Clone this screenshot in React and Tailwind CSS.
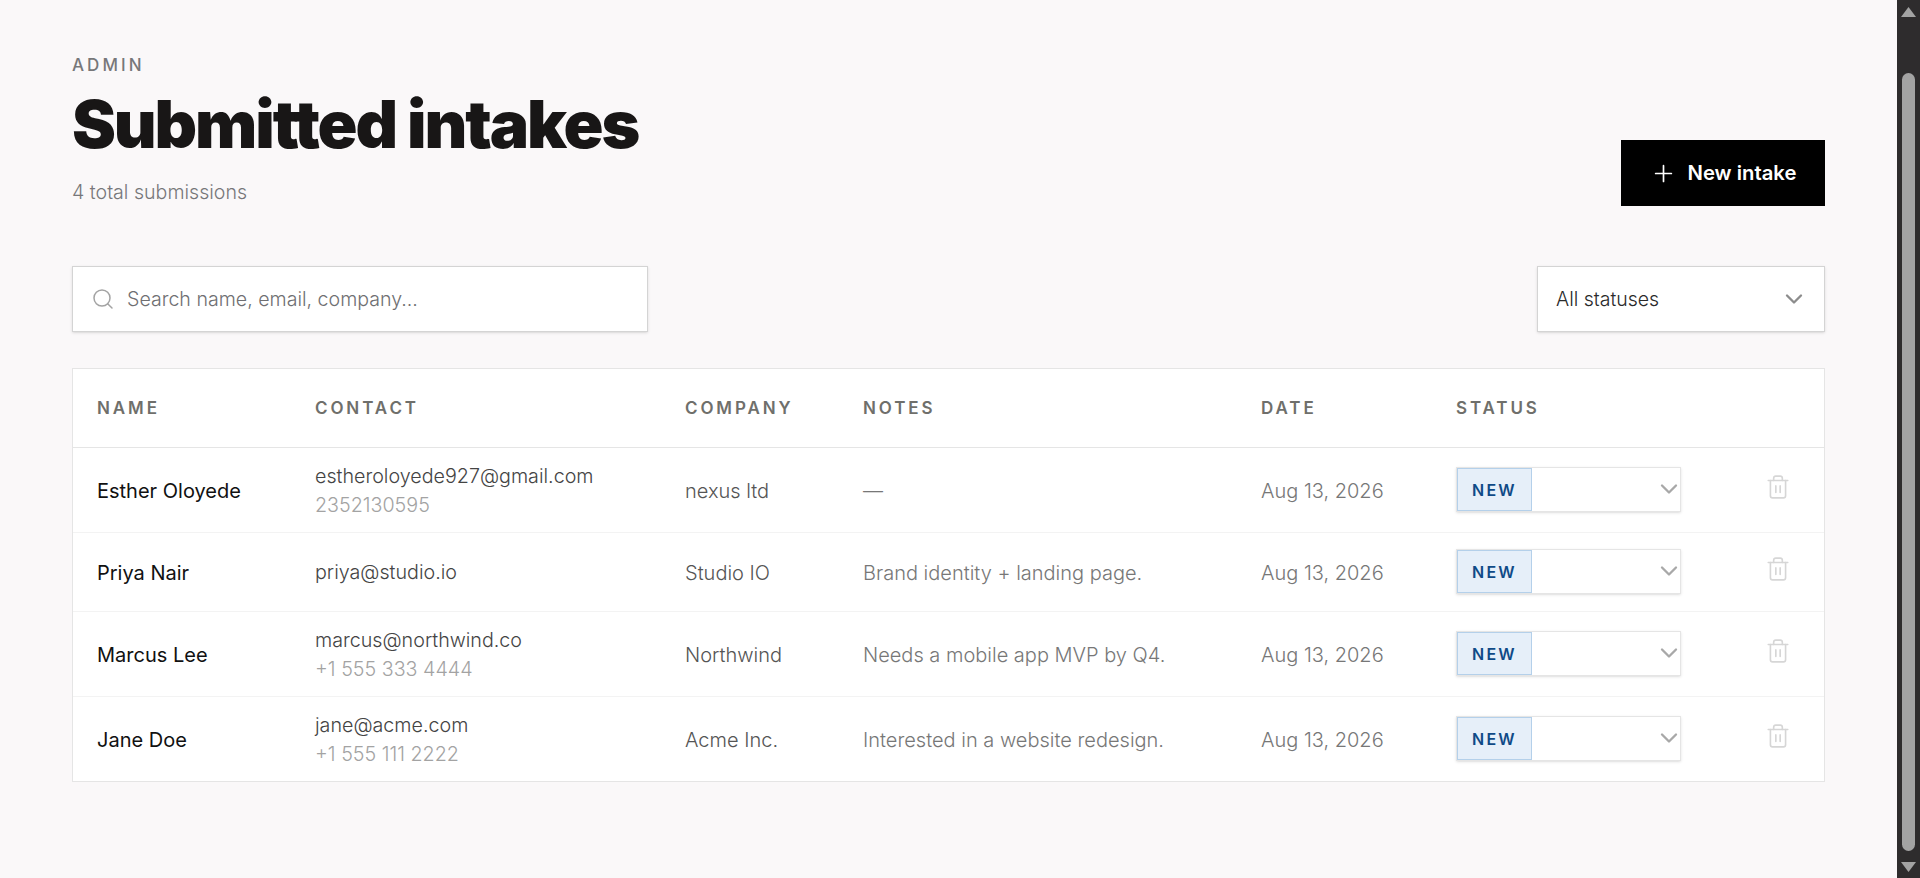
import React from 'react';
import { Search, Plus, ChevronDown, Trash2 } from 'lucide-react';

const intakes = [
  { name: 'Esther Oloyede', email: 'estheroloyede927@gmail.com', phone: '2352130595', company: 'nexus ltd', notes: '—', date: 'Aug 13, 2026' },
  { name: 'Priya Nair', email: 'priya@studio.io', phone: '', company: 'Studio IO', notes: 'Brand identity + landing page.', date: 'Aug 13, 2026' },
  { name: 'Marcus Lee', email: 'marcus@northwind.co', phone: '+1 555 333 4444', company: 'Northwind', notes: 'Needs a mobile app MVP by Q4.', date: 'Aug 13, 2026' },
  { name: 'Jane Doe', email: 'jane@acme.com', phone: '+1 555 111 2222', company: 'Acme Inc.', notes: 'Interested in a website redesign.', date: 'Aug 13, 2026' },
];

const headers = ['Name', 'Contact', 'Company', 'Notes', 'Date', 'Status', ''];

const StatusSelect = () => (
  <div className="flex h-[45px] w-[225px] items-stretch border border-[#e5e5e5] bg-white shadow-sm">
    <span className="flex w-[75px] items-center justify-center border border-[#b4d0ea] bg-[#e6eff9] pt-[2px] text-[16px] font-semibold tracking-[0.14em] text-[#0f4a87]">
      NEW
    </span>
    <div className="flex flex-1 items-center justify-end">
      <ChevronDown size={28} strokeWidth={2} className="-mr-[3px] text-[#a8a8a8]" />
    </div>
  </div>
);

const Scrollbar = () => (
  <aside className="flex h-full w-[23px] shrink-0 flex-col items-center bg-[#2e2c2d] pt-[7px] pb-[6px]">
    <svg width="15" height="10" viewBox="0 0 15 10" className="shrink-0">
      <path d="M7.5 0 L15 10 H0 Z" fill="#a3a3a3" />
    </svg>
    <div className="mt-[56px] mb-[11px] w-[13px] flex-1 rounded-full bg-[#a3a3a3]" />
    <svg width="15" height="10" viewBox="0 0 15 10" className="shrink-0">
      <path d="M0 0 H15 L7.5 10 Z" fill="#a3a3a3" />
    </svg>
  </aside>
);

export default function App() {
  return (
    <div className="flex h-[878px] overflow-hidden bg-[#faf8f9] font-['Inter',sans-serif]">
      <main className="min-w-0 flex-1 px-[72px] pt-[52px]">
        <div className="flex items-end justify-between">
          <div>
            <p className="text-[17px] leading-[26px] font-medium tracking-[0.18em] text-[#77777a]">ADMIN</p>
            <h1 className="mt-[10px] text-[66px] leading-[72px] font-black tracking-[-0.032em] text-[#181616]">Submitted intakes</h1>
            <p className="mt-[18px] text-[19.6px] leading-[28px] font-light text-[#77777a]">4 total submissions</p>
          </div>
          <button className="flex h-[66px] w-[204px] items-center justify-center gap-[11px] bg-black text-[20.3px] font-semibold text-white">
            <Plus size={27} strokeWidth={1.5} />
            New intake
          </button>
        </div>

        <div className="mt-[60px] flex items-center justify-between">
          <div className="flex h-[66px] w-[576px] items-center gap-[12px] border border-[#d4d4d4] bg-white pl-[18px] shadow-sm">
            <Search size={24} strokeWidth={1.5} className="text-[#a3a3a3]" />
            <input
              type="text"
              placeholder="Search name, email, company..."
              className="min-w-0 flex-1 bg-transparent pt-[2px] text-[19.6px] font-light outline-none placeholder:text-[#6f6f72]"
            />
          </div>
          <div className="flex h-[66px] w-[288px] items-center justify-between border border-[#d4d4d4] bg-white pr-[16px] pl-[18px] text-[19.5px] font-light text-[#2a2a2a] shadow-sm">
            <span className="pt-[2px]">All statuses</span>
            <ChevronDown size={28} strokeWidth={2} className="text-[#8c8c8c]" />
          </div>
        </div>

        <div className="mt-[36px] border border-[#e5e5e5] bg-white">
          <table className="w-full table-fixed">
            <colgroup>
              <col className="w-[218px]" />
              <col className="w-[370px]" />
              <col className="w-[178px]" />
              <col className="w-[398px]" />
              <col className="w-[195px]" />
              <col className="w-[273px]" />
              <col className="w-[119px]" />
            </colgroup>
            <thead>
              <tr className="border-b border-[#e5e5e5]">
                {headers.map((h) => (
                  <th key={h} className="h-[78px] pt-[2px] pl-[24px] text-left text-[17px] font-semibold tracking-[0.17em] text-[#6f6f6b] uppercase">
                    {h}
                  </th>
                ))}
              </tr>
            </thead>
            <tbody>
              {intakes.map((row) => (
                <tr key={row.name} className="border-b border-[#f3f3f3] last:border-b-0">
                  <td className="pt-[2px] pl-[24px] text-[20px] font-normal text-[#111]">{row.name}</td>
                  <td className="pt-[14px] pb-[12px] pl-[24px] text-[19.7px] leading-[29px] font-light">
                    <div className="text-[#444]">{row.email}</div>
                    {row.phone && <div className="text-[#a3a3a3]">{row.phone}</div>}
                  </td>
                  <td className="pt-[2px] pl-[24px] text-[20px] font-light text-[#555]">{row.company}</td>
                  <td className="pt-[2px] pl-[24px] text-[20px] font-light text-[#777]">{row.notes}</td>
                  <td className="pt-[2px] pl-[24px] text-[20px] font-light text-[#777]">{row.date}</td>
                  <td className="pt-[16px] pb-[17px] pl-[24px]">
                    <StatusSelect />
                  </td>
                  <td>
                    <div className="flex justify-end pr-[33px] pb-[5px]">
                      <Trash2 size={26} strokeWidth={1.5} className="text-[#d6d6d6]" />
                    </div>
                  </td>
                </tr>
              ))}
            </tbody>
          </table>
        </div>
      </main>
      <Scrollbar />
    </div>
  );
}
